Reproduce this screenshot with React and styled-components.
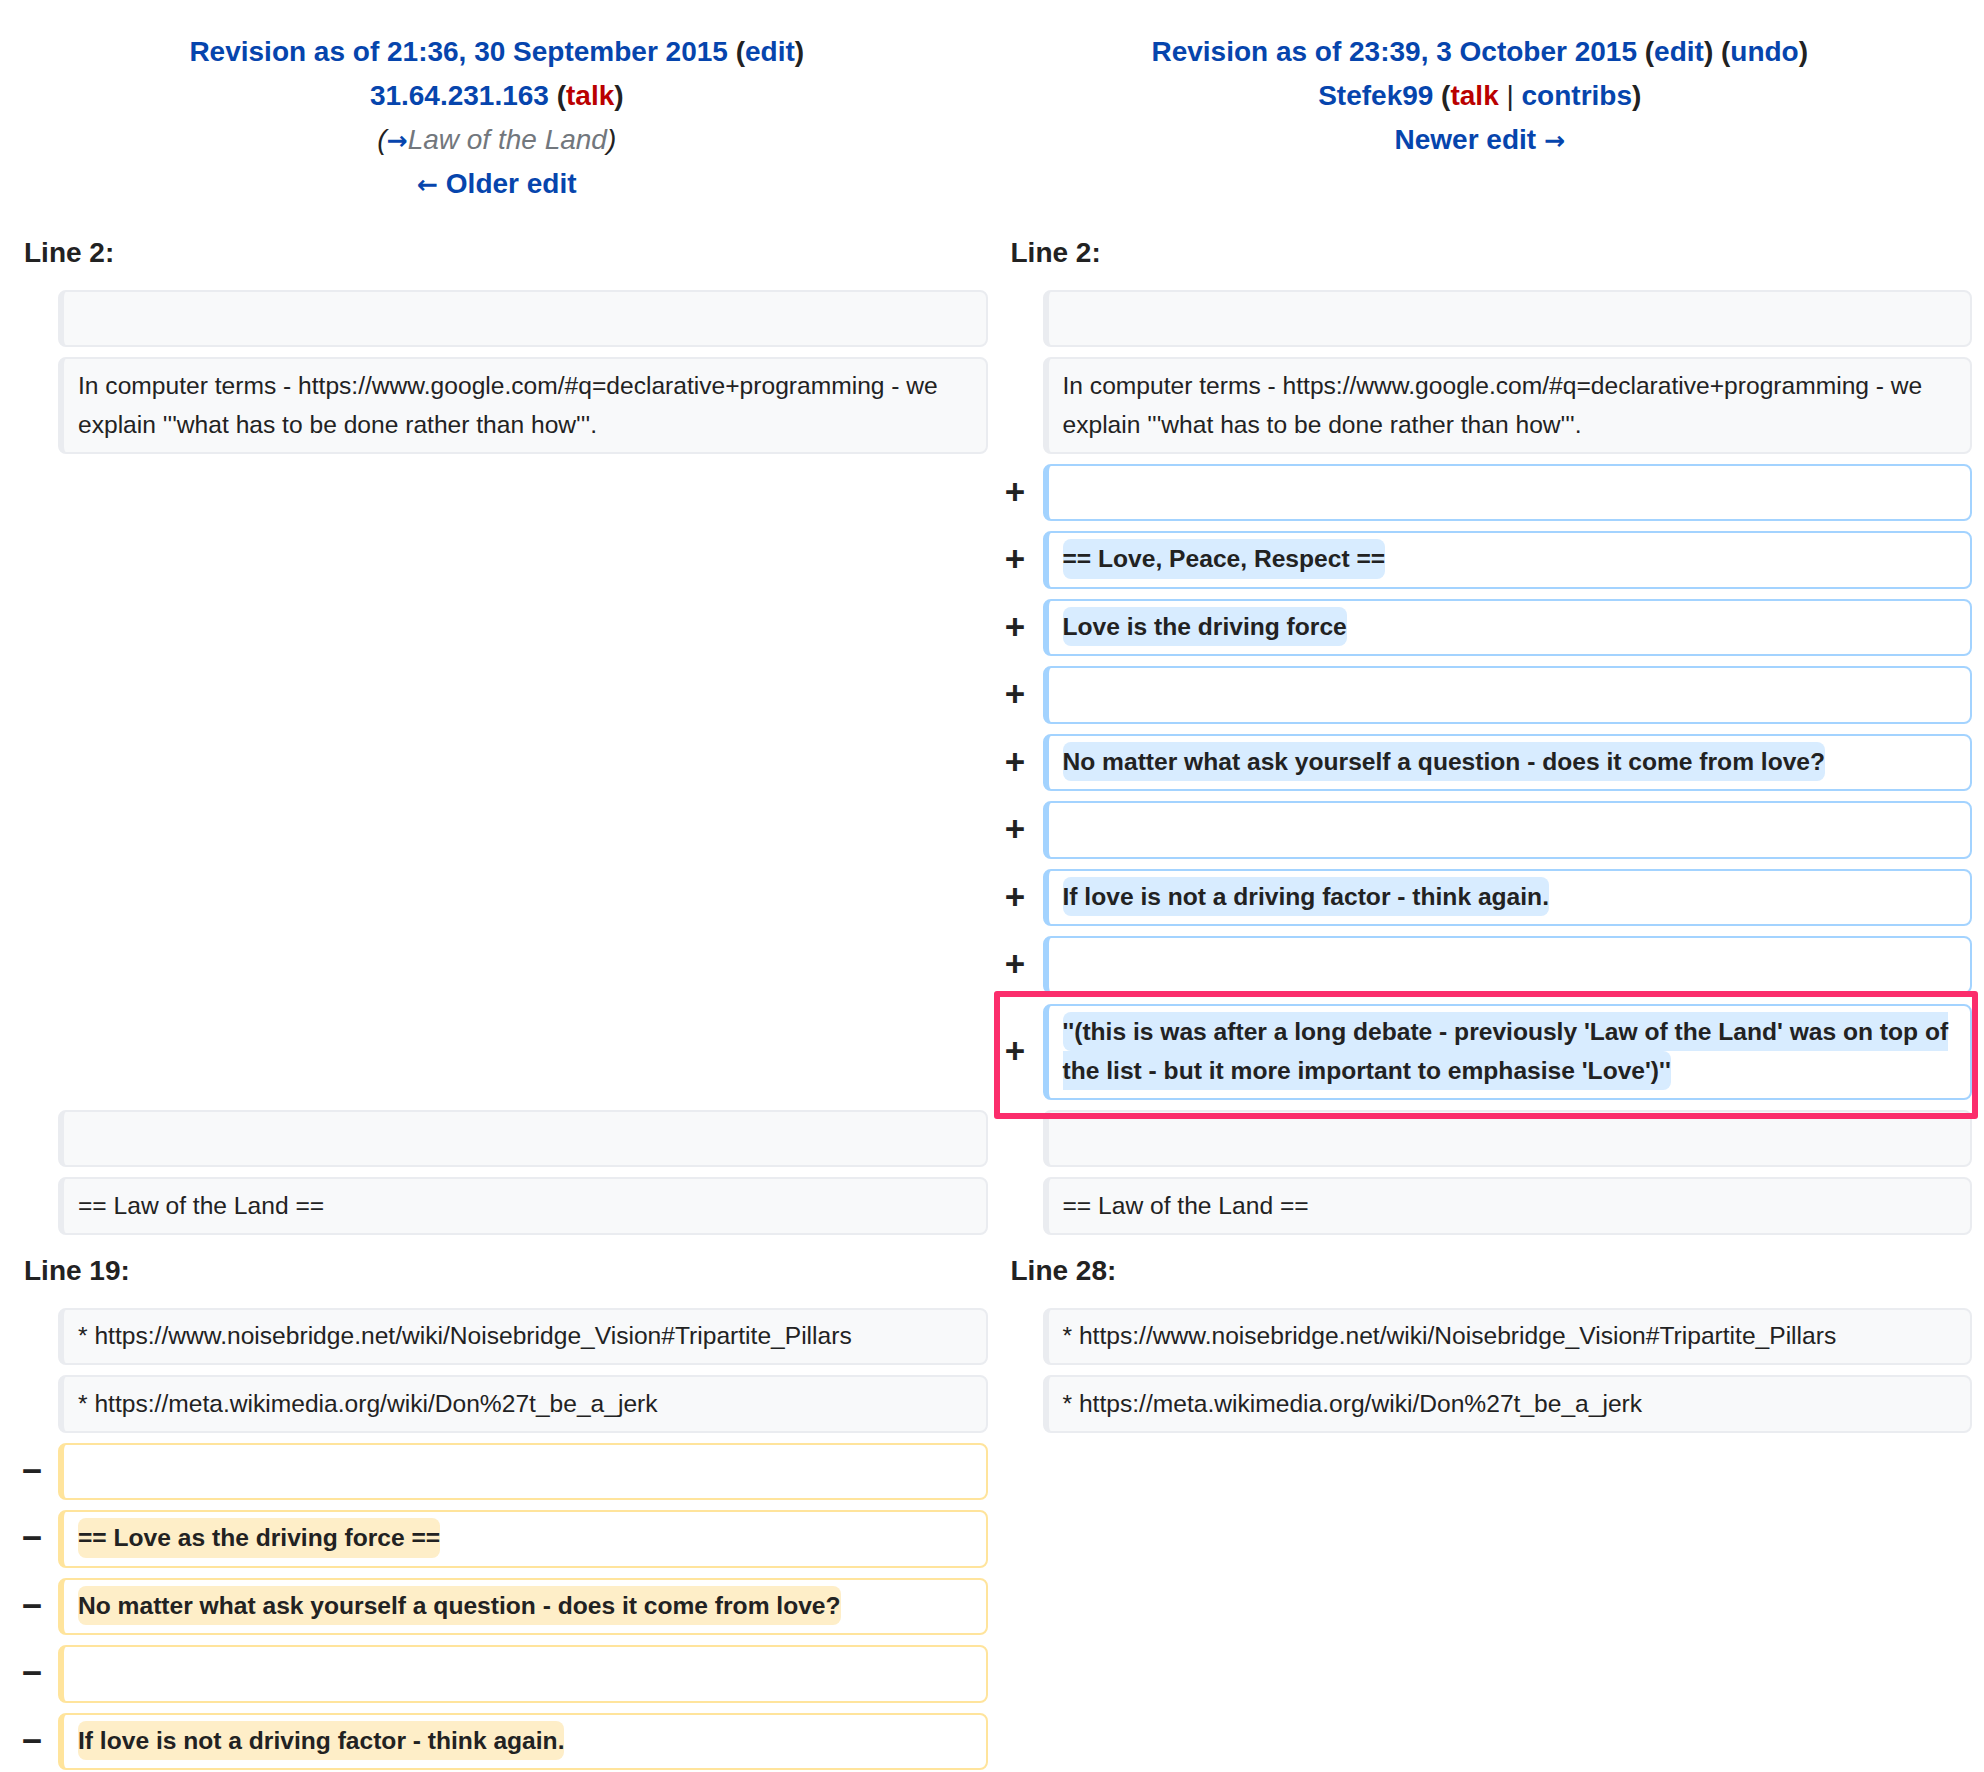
import styled, { createGlobalStyle } from 'styled-components';

const GlobalStyle = createGlobalStyle`
  html,
  body {
    margin: 0;
    background: #ffffff;
  }

  body {
    font-family: "Liberation Sans", Arial, Helvetica, sans-serif;
    color: #222222;
  }
`;

const Diff = styled.div`
  display: grid;
  grid-template-columns: 52px 1fr 55px 1fr;
  row-gap: 10px;
  padding: 30px 12px 0 6px;
`;

const Title = styled.div`
  grid-column: ${(p) => (p.$side === 'right' ? '3 / 5' : '1 / 3')};
  text-align: center;
  font-size: 28px;
  line-height: 44px;
  font-weight: bold;
  margin-bottom: 11px;

  & > div {
    height: 44px;
  }
`;

const Comment = styled.div`
  font-weight: normal;
  font-style: italic;

  .auto {
    color: #72777d;
  }
`;

const Link = styled.a`
  color: ${(p) => (p.$missing ? '#ba0000' : '#0645ad')};
  text-decoration: none;
`;

const Arrow = styled.span`
  font-family: "DejaVu Sans", sans-serif;
  font-style: normal;
  font-weight: bold;
  font-size: 0.9em;
  line-height: 0;
`;

const Pipe = styled.span`
  font-weight: normal;
`;

const LineNo = styled.div`
  grid-column: ${(p) => (p.$side === 'right' ? '3 / 5' : '1 / 3')};
  font-size: 28px;
  line-height: 44px;
  font-weight: bold;
  padding: 4px 0 5px ${(p) => (p.$side === 'right' ? '23px' : '18px')};
`;

const Marker = styled.div`
  grid-column: ${(p) => (p.$side === 'right' ? 3 : 1)};
  display: flex;
  align-items: center;
  justify-content: center;
  font-size: 35px;
  line-height: 1;
  font-weight: bold;
  padding-bottom: 2px;
`;

const Blank = styled.div`
  grid-column: ${(p) => (p.$side === 'right' ? '3 / 5' : '1 / 3')};
`;

const borders = {
  context: '#eaecf0',
  added: '#a3d3ff',
  deleted: '#ffe49c',
};

const highlights = {
  added: '#d8ecff',
  deleted: '#feeec8',
};

const Cell = styled.div`
  grid-column: ${(p) => (p.$side === 'right' ? 4 : 2)};
  position: relative;
  font-size: 24.6px;
  line-height: 38.7px;
  padding: 7.4px 14px;
  border: 2px solid ${(p) => borders[p.$kind]};
  border-left-width: 6px;
  border-radius: 8px;
  background: ${(p) => (p.$kind === 'context' ? '#f8f9fa' : '#ffffff')};
  word-wrap: break-word;
`;

const Change = styled.span`
  background: ${(p) => highlights[p.$kind]};
  font-weight: bold;
  border-radius: 8px;
  padding: 0.25em 0;
`;

const Callout = styled.div`
  position: absolute;
  left: -55px;
  right: -8px;
  top: -15px;
  bottom: -21px;
  border: 6px solid #fb2d6c;
  border-radius: 3px;
  pointer-events: none;
  z-index: 2;
`;

const PROGRAMMING =
  "In computer terms - https://www.google.com/#q=declarative+programming - we explain '''what has to be done rather than how'''.";

const QUOTE =
  "''(this is was after a long debate - previously 'Law of the Land' was on top of the list - but it more important to emphasise 'Love')''";

const rows = [
  { lineno: ['Line 2:', 'Line 2:'] },
  { left: ['context', ''], right: ['context', ''] },
  { left: ['context', PROGRAMMING], right: ['context', PROGRAMMING] },
  { right: ['added', ''] },
  { right: ['added', '== Love, Peace, Respect =='] },
  { right: ['added', 'Love is the driving force'] },
  { right: ['added', ''] },
  { right: ['added', 'No matter what ask yourself a question - does it come from love?'] },
  { right: ['added', ''] },
  { right: ['added', 'If love is not a driving factor - think again.'] },
  { right: ['added', ''] },
  { right: ['added', QUOTE], callout: true },
  { left: ['context', ''], right: ['context', ''] },
  { left: ['context', '== Law of the Land =='], right: ['context', '== Law of the Land =='] },
  { lineno: ['Line 19:', 'Line 28:'] },
  {
    left: ['context', '* https://www.noisebridge.net/wiki/Noisebridge_Vision#Tripartite_Pillars'],
    right: ['context', '* https://www.noisebridge.net/wiki/Noisebridge_Vision#Tripartite_Pillars'],
  },
  {
    left: ['context', '* https://meta.wikimedia.org/wiki/Don%27t_be_a_jerk'],
    right: ['context', '* https://meta.wikimedia.org/wiki/Don%27t_be_a_jerk'],
  },
  { left: ['deleted', ''] },
  { left: ['deleted', '== Love as the driving force =='] },
  { left: ['deleted', 'No matter what ask yourself a question - does it come from love?'] },
  { left: ['deleted', ''] },
  { left: ['deleted', 'If love is not a driving factor - think again.'] },
];

const Side = ({ side, cell, callout }) => {
  if (!cell) return <Blank $side={side} />;
  const [kind, text] = cell;
  return (
    <>
      {kind === 'context' ? (
        <Marker $side={side} />
      ) : (
        <Marker $side={side}>{kind === 'added' ? '+' : '\u2212'}</Marker>
      )}
      <Cell $side={side} $kind={kind}>
        {text === '' ? (
          '\u00a0'
        ) : kind === 'context' ? (
          text
        ) : (
          <Change $kind={kind}>{text}</Change>
        )}
        {callout && <Callout />}
      </Cell>
    </>
  );
};

const LineNoPair = ({ labels }) => (
  <>
    <LineNo $side="left">{labels[0]}</LineNo>
    <LineNo $side="right">{labels[1]}</LineNo>
  </>
);

const RowPair = ({ row }) => (
  <>
    <Side side="left" cell={row.left} />
    <Side side="right" cell={row.right} callout={row.callout} />
  </>
);

const App = () => {
  return (
    <>
      <GlobalStyle />
      <Diff>
        <Title $side="left">
          <div>
            <Link href="#">Revision as of 21:36, 30 September 2015</Link> (
            <Link href="#">edit</Link>)
          </div>
          <div>
            <Link href="#">31.64.231.163</Link> (
            <Link href="#" $missing>
              talk
            </Link>
            )
          </div>
          <Comment>
            (
            <Link href="#">
              <Arrow>→</Arrow>
            </Link>
            <span className="auto">Law of the Land</span>)
          </Comment>
          <div>
            <Link href="#">
              <Arrow>←</Arrow> Older edit
            </Link>
          </div>
        </Title>
        <Title $side="right">
          <div>
            <Link href="#">Revision as of 23:39, 3 October 2015</Link> (
            <Link href="#">edit</Link>) (<Link href="#">undo</Link>)
          </div>
          <div>
            <Link href="#">Stefek99</Link> (
            <Link href="#" $missing>
              talk
            </Link>{' '}
            <Pipe>|</Pipe> <Link href="#">contribs</Link>)
          </div>
          <div>
            <Link href="#">
              Newer edit <Arrow>→</Arrow>
            </Link>
          </div>
        </Title>

        {rows.map((row, i) =>
          row.lineno ? (
            <LineNoPair key={i} labels={row.lineno} />
          ) : (
            <RowPair key={i} row={row} />
          )
        )}
      </Diff>
    </>
  );
};

export default App;
